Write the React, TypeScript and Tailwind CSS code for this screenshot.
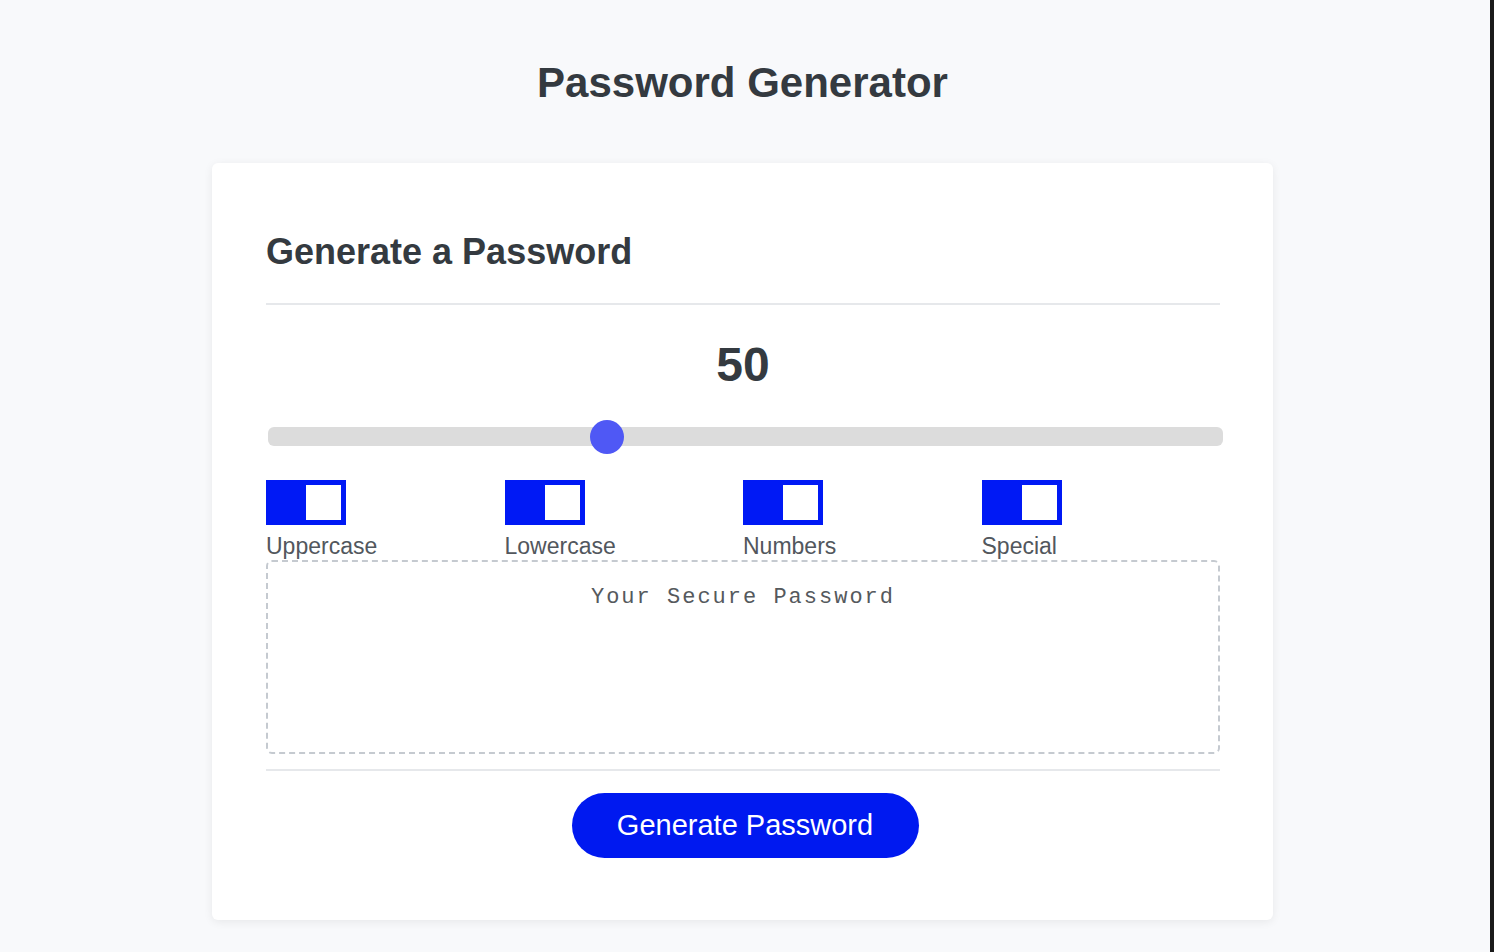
import { useState } from "react";

const OPTIONS = ["Uppercase", "Lowercase", "Numbers", "Special"] as const;

const MIN = 8;
const MAX = 128;

const Toggle = ({ label, checked, onToggle }: { label: string; checked: boolean; onToggle: () => void }) => (
  <label className="flex cursor-pointer flex-col items-start">
    <button
      type="button"
      onClick={onToggle}
      className="flex h-[45px] w-[80px] bg-[#0019f5] p-[5px] pl-[40px]"
      aria-pressed={checked}
    >
      <span className={checked ? "h-full w-full bg-white" : "h-full w-full bg-[#0019f5]"} />
    </button>
    <span className="mt-[8px] text-[23px] leading-[26px] text-[#52575d]">{label}</span>
  </label>
);

const App = () => {
  const [length] = useState(50);
  const [enabled, setEnabled] = useState<Record<string, boolean>>({
    Uppercase: true,
    Lowercase: true,
    Numbers: true,
    Special: true,
  });

  const ratio = (length - MIN) / (MAX - MIN);

  return (
    <div className="flex min-h-screen bg-[#f8f9fb] font-['Liberation_Sans',Arial,sans-serif]">
      <main className="flex flex-1 flex-col items-center pr-[5px] pb-8">
        <h1 className="mt-[58px] text-[42px] leading-[50px] font-bold text-[#343a40]">Password Generator</h1>

        <section className="mt-[55px] w-[1061px] rounded-md bg-white pt-[67px] pr-[53px] pb-[62px] pl-[54px] shadow-[0_2px_10px_rgba(0,0,0,0.07)]">
          <h2 className="text-[36px] leading-[43px] font-bold text-[#343a40]">Generate a Password</h2>
          <div className="mt-[30px] h-[2px] bg-[#e6e8eb]" />

          <div className="mt-[31px] text-center text-[48px] leading-[58px] font-bold text-[#343a40]">{length}</div>

          <div className="relative mt-[33px] -mr-[3px] ml-[2px] h-[19px] rounded-md bg-[#dcdcdc]">
            <span
              className="absolute top-1/2 h-[34px] w-[34px] -translate-y-1/2 rounded-full bg-[#4f58f5]"
              style={{ left: `calc((100% - 34px) * ${ratio})` }}
            />
          </div>

          <div className="mt-[34px] grid grid-cols-4">
            {OPTIONS.map((name) => (
              <Toggle
                key={name}
                label={name}
                checked={enabled[name]}
                onToggle={() => setEnabled((prev) => ({ ...prev, [name]: !prev[name] }))}
              />
            ))}
          </div>

          <div className="mt-[1px] h-[194px] rounded-md border-2 border-dashed border-[#c5cad0] pt-[23px] text-center">
            <span className="font-['Liberation_Mono','Courier_New',monospace] text-[22px] leading-[26px] tracking-[2px] text-[#55595d]">
              Your Secure Password
            </span>
          </div>

          <div className="mt-[15px] h-[2px] bg-[#e6e8eb]" />

          <div className="mt-[22px] flex justify-center pl-[4px]">
            <button
              type="button"
              className="h-[65px] w-[347px] rounded-full bg-[#0019f0] text-[29px] text-white"
            >
              Generate Password
            </button>
          </div>
        </section>
      </main>
      <div className="w-[4px] bg-[#1a1a1a]" />
    </div>
  );
};

export default App;
